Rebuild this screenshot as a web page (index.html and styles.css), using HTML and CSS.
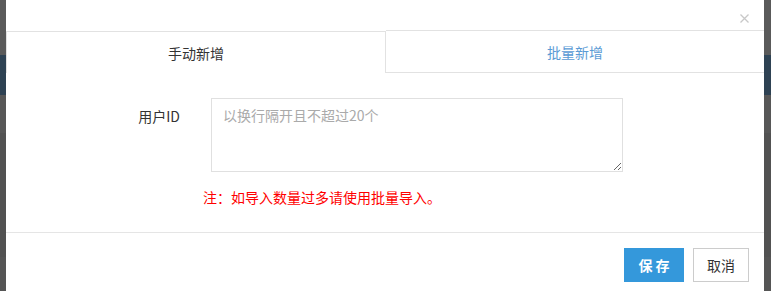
FILE: index.html
```html
<!DOCTYPE html>
<html lang="zh-CN">
<head>
<meta charset="utf-8">
<title>新增用户</title>
<link rel="stylesheet" href="styles.css">
</head>
<body>
<div class="modal">
  <div class="modal-header">
    <svg class="close" width="9" height="9" viewBox="0 0 9 9" aria-label="关闭">
      <path d="M0.5 0.5 L8.5 8.5 M8.5 0.5 L0.5 8.5" stroke="#c8c8c8" stroke-width="1.3" fill="none"/>
    </svg>
  </div>
  <div class="tabs">
    <div class="tab active">手动新增</div>
    <div class="tab">批量新增</div>
  </div>
  <div class="modal-body">
    <div class="form-row">
      <label class="label">用户ID</label>
      <textarea class="input" placeholder="以换行隔开且不超过20个"></textarea>
    </div>
    <p class="note">注：如导入数量过多请使用批量导入。</p>
  </div>
  <div class="modal-footer">
    <button class="btn btn-primary">保 存</button>
    <button class="btn btn-default">取消</button>
  </div>
</div>
</body>
</html>
```

FILE: styles.css
```css
* { box-sizing: border-box; }
html, body { height: 100%; }
body {
  margin: 0;
  font-family: "Noto Sans CJK SC", "Noto Sans", sans-serif;
  font-size: 14px;
  color: #333;
  overflow: hidden;
  background: linear-gradient(to bottom,
    #5a5a5a 0, #5a5a5a 55px,
    #2e4253 55px, #2e4253 95px,
    #575757 95px, #575757 133px,
    #525252 133px, #525252 257px,
    #555 257px);
}
.modal {
  margin: 0 7px 0 6px;
  height: 100%;
  background: #fff;
}
.modal-header {
  height: 31px;
  display: flex;
  justify-content: flex-end;
  align-items: flex-start;
  padding: 14px 15px 0 0;
}
.close {
  display: block;
}
.tabs {
  display: flex;
  align-items: flex-start;
  height: 42px;
}
.tab {
  flex: 1;
  display: flex;
  align-items: center;
  justify-content: center;
  font-size: 14px;
  color: #5b9bd5;
  border-top: 1px solid #e2e2e2;
  border-bottom: 1px solid #e2e2e2;
  margin-top: -1px;
  height: 43px;
  padding-top: 1px;
}
.tab.active {
  color: #333;
  border-bottom: none;
  border-left: 1px solid #e2e2e2;
  border-right: 1px solid #e2e2e2;
  margin-top: 0;
  height: 42px;
  padding-top: 0;
}
.modal-body {
  padding: 25px 0 0 0;
  height: 160px;
  border-bottom: 1px solid #e5e5e5;
}
.form-row {
  display: flex;
  align-items: flex-start;
}
.label {
  width: 174px;
  text-align: right;
  line-height: 20px;
  padding-top: 8px;
  margin-right: 31px;
}
.input {
  width: 412px;
  height: 74px;
  border: 1px solid #e0e0e0;
  padding: 6px 11px;
  font-family: inherit;
  font-size: 14px;
  line-height: 20px;
  color: #333;
  resize: vertical;
  outline: none;
  margin: 0;
}
.input::placeholder { color: #aaa; }
.note {
  margin: 15px 0 0 197px;
  color: #ff0000;
  font-size: 14px;
  line-height: 20px;
}
.modal-footer {
  display: flex;
  justify-content: flex-end;
  gap: 9px;
  padding: 15px 15px 0 0;
}
.btn {
  height: 34px;
  font-family: inherit;
  font-size: 14px;
  margin: 0;
  cursor: pointer;
}
.btn-primary {
  width: 60px;
  background: #3498db;
  color: #fff;
  border: none;
  font-weight: bold;
}
.btn-default {
  width: 56px;
  background: #fff;
  color: #333;
  border: 1px solid #ccc;
}
```
